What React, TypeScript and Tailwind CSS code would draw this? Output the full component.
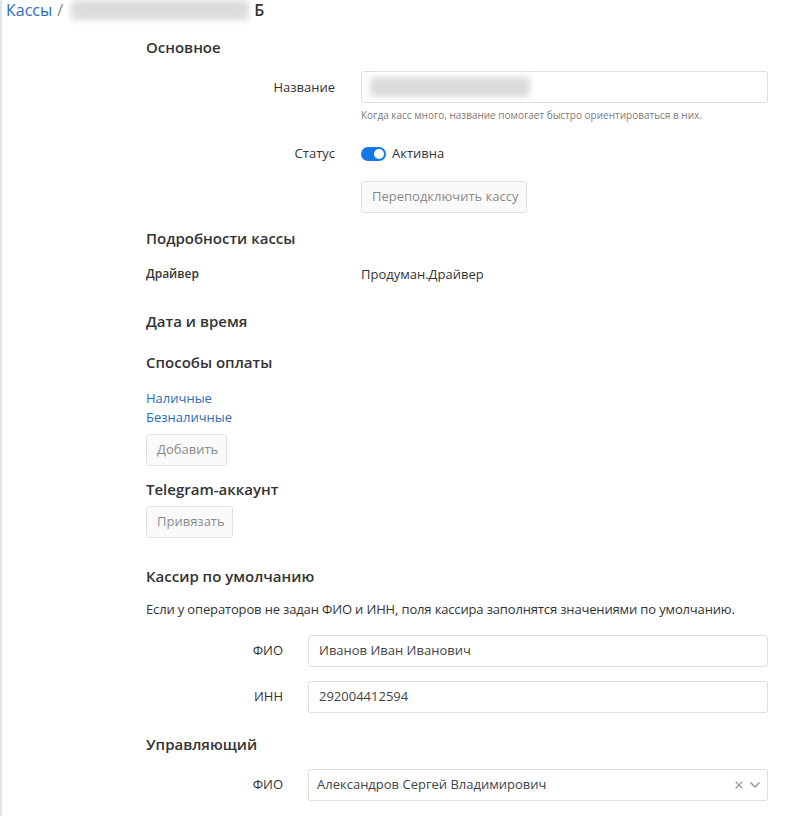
import { X, ChevronDown } from 'lucide-react'

function Heading({ children, className = '' }: { children: React.ReactNode; className?: string }) {
    return <h2 className={`text-[15px] font-semibold text-[#333] leading-5 ${className}`}>{children}</h2>
}

function Btn({ children, className = '' }: { children: React.ReactNode; className?: string }) {
    return (
        <button className={`h-[32px] px-[10px] whitespace-nowrap rounded-[3px] border border-[#e2e2e2] bg-[#fafafa] text-[13px] text-[#8a8a8a] ${className}`}>
            {children}
        </button>
    )
}

function Blur({ w }: { w: number }) {
    return <div className="h-[20px] rounded-sm bg-[#dcdcdc] blur-[3px]" style={{ width: w }} />
}

export default function App() {
    return (
        <div className="min-h-[816px] w-[794px] bg-white border-l-2 border-[#dfe5ee] font-['Open_Sans',sans-serif] text-[#333]">
            {/* breadcrumb */}
            <div className="flex items-center pl-[4px] text-[16px] leading-[20px]">
                <span className="text-[#2d6db5]">Кассы</span>
                <span className="text-[#888] ml-[5px]">/</span>
                <div className="ml-[8px] w-[178px]"><Blur w={178} /></div>
                <span className="ml-[5px] font-semibold text-[#333]">Б</span>
            </div>

            <div className="pl-[144px] pr-[26px]">
                <Heading className="mt-[17px]">Основное</Heading>

                <div className="flex mt-[14px]">
                    <div className="w-[215px] pr-[26px] text-right text-[13px] pt-[7px]">Название</div>
                    <div className="flex-1">
                        <div className="h-[32px] border border-[#dedede] rounded-[3px] flex items-center px-[8px]">
                            <Blur w={160} />
                        </div>
                        <p className="text-[10px] text-[#7a7a7a] mt-[5px]">Когда касс много, название помогает быстро ориентироваться в них.</p>
                    </div>
                </div>

                <div className="flex mt-[21px] items-center">
                    <div className="w-[215px] pr-[26px] text-right text-[13px]">Статус</div>
                    <div className="flex items-center gap-[6px]">
                        <div className="w-[25px] h-[14px] rounded-full bg-[#1677e6] flex items-center justify-end pr-[2px]">
                            <div className="w-[10px] h-[10px] rounded-full bg-white" />
                        </div>
                        <span className="text-[13px]">Активна</span>
                    </div>
                </div>

                <div className="flex mt-[17px]">
                    <div className="w-[215px]" />
                    <Btn className="w-[166px]">Переподключить кассу</Btn>
                </div>

                <Heading className="mt-[15px]">Подробности кассы</Heading>
                <div className="flex mt-[17px] text-[12px]">
                    <div className="w-[215px] font-semibold">Драйвер</div>
                    <div className="text-[13px]">Продуман.Драйвер</div>
                </div>

                <Heading className="mt-[27px]">Дата и время</Heading>
                <Heading className="mt-[21px]">Способы оплаты</Heading>

                <div className="mt-[17px] flex flex-col text-[13px] leading-[19px] text-[#2d6db5]">
                    <span>Наличные</span>
                    <span>Безналичные</span>
                </div>
                <Btn className="mt-[7px] w-[81px]">Добавить</Btn>

                <Heading className="mt-[13px]">Telegram-аккаунт</Heading>
                <Btn className="mt-[7px] w-[87px]">Привязать</Btn>

                <Heading className="mt-[28px]">Кассир по умолчанию</Heading>
                <p className="text-[13px] mt-[14px] tracking-[-0.15px]">Если у операторов не задан ФИО и ИНН, поля кассира заполнятся значениями по умолчанию.</p>

                <div className="flex items-center mt-[15px]">
                    <div className="w-[162px] pr-[25px] text-right text-[13px]">ФИО</div>
                    <div className="flex-1 h-[32px] border border-[#dedede] rounded-[3px] flex items-center px-[10px] text-[13px] text-[#444]">Иванов Иван Иванович</div>
                </div>
                <div className="flex items-center mt-[14px]">
                    <div className="w-[162px] pr-[25px] text-right text-[13px]">ИНН</div>
                    <div className="flex-1 h-[32px] border border-[#dedede] rounded-[3px] flex items-center px-[10px] text-[13px] text-[#444]">292004412594</div>
                </div>

                <Heading className="mt-[21px]">Управляющий</Heading>
                <div className="flex items-center mt-[15px]">
                    <div className="w-[162px] pr-[25px] text-right text-[13px]">ФИО</div>
                    <div className="flex-1 h-[32px] border border-[#dedede] rounded-[3px] flex items-center pl-[8px] pr-[4px] text-[13px] text-[#444]">
                        <span className="flex-1">Александров Сергей Владимирович</span>
                        <X className="w-[12px] h-[12px] text-[#999]" strokeWidth={2.5} />
                        <ChevronDown className="w-[16px] h-[16px] text-[#999] ml-[2px]" strokeWidth={2.5} />
                    </div>
                </div>
            </div>
        </div>
    )
}
